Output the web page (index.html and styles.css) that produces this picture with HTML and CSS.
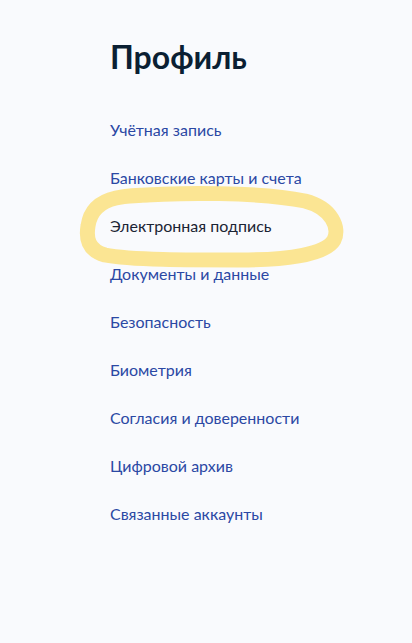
FILE: index.html
```html
<!DOCTYPE html>
<html lang="ru">
<head>
<meta charset="utf-8">
<title>Профиль</title>
<link rel="stylesheet" href="styles.css">
</head>
<body>
<main class="page">
  <h1 class="title">Профиль</h1>
  <nav class="menu">
    <a class="item" href="#">Учётная запись</a>
    <a class="item" href="#">Банковские карты и счета</a>
    <a class="item item-active" href="#">Электронная подпись
      <svg class="mark" width="290" height="100" viewBox="0 0 290 100" aria-hidden="true">
        <path d="M60 16 C 110 12, 190 12, 235 21 C 262 28, 270 48, 264 60 C 256 74, 220 80, 170 80 C 120 80, 60 80, 35 75 C 18 70, 16 58, 18 46 C 20 32, 28 22, 46 18 C 56 16, 66 15, 80 15" fill="none" stroke="#fbe593" stroke-width="15" stroke-linecap="round" stroke-linejoin="round"/>
      </svg>
    </a>
    <a class="item" href="#">Документы и данные</a>
    <a class="item" href="#">Безопасность</a>
    <a class="item" href="#">Биометрия</a>
    <a class="item" href="#">Согласия и доверенности</a>
    <a class="item" href="#">Цифровой архив</a>
    <a class="item" href="#">Связанные аккаунты</a>
  </nav>
</main>
</body>
</html>
```
FILE: styles.css
```css
html, body {
  margin: 0;
  padding: 0;
  background: #f9fafd;
}
body {
  font-family: Lato, "Noto Sans", sans-serif;
  min-height: 643px;
}
.page {
  padding: 38px 0 0 110px;
}
.title {
  margin: 0;
  font-size: 32px;
  line-height: 38px;
  font-weight: 700;
  color: #0b1f33;
}
.menu {
  display: flex;
  flex-direction: column;
  margin-top: 44px;
}
.item {
  position: relative;
  display: block;
  font-size: 16px;
  line-height: 20px;
  margin-bottom: 28px;
  color: #2b48a4;
  text-decoration: none;
  width: max-content;
}
.item-active {
  color: #1b2434;
  isolation: isolate;
}
.mark {
  position: absolute;
  left: -40px;
  top: -36px;
  pointer-events: none;
  z-index: -1;
}
```
